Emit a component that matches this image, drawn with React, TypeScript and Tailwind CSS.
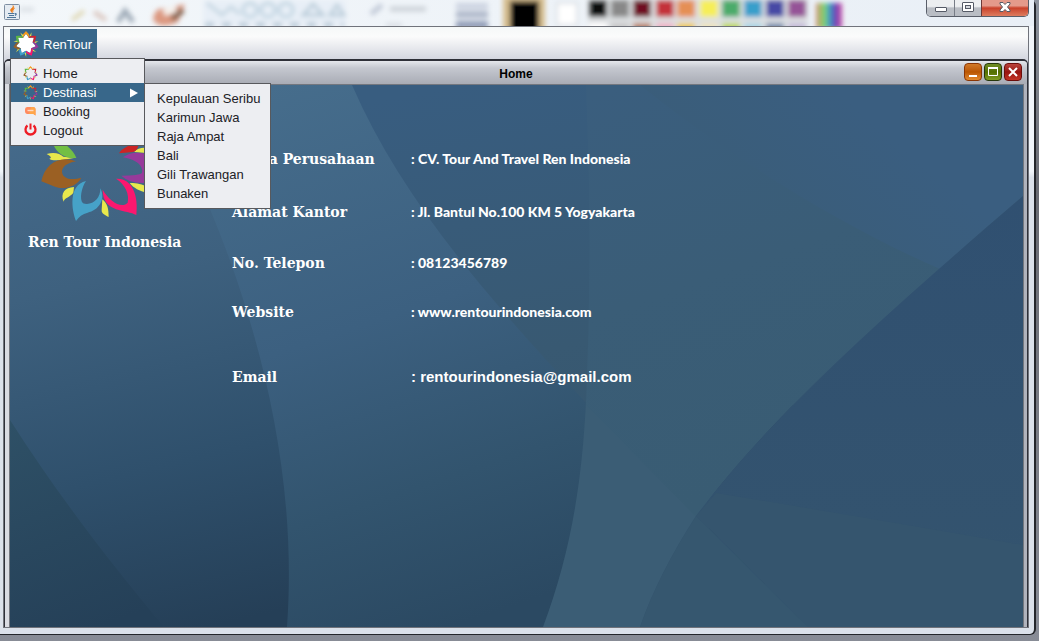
import React from "react";

const petals = ["#f59a1c", "#cf2430", "#94399a", "#f5176c", "#3d9fc9", "#96602a", "#5cb544"];

function StarIcon({ size, fill }: { size: number; fill?: string }) {
  return (
    <svg width={size} height={size} viewBox="-50 -50 100 100" aria-hidden="true" className="shrink-0">
      {fill && <circle r="26" fill={fill} />}
      {petals.map((color, i) => (
        <g key={color} transform={`rotate(${(i * 360) / 7})`}>
          <path d="M13 -28 L21 -45 L20 -29 Z" fill="#e5e64a" />
          {fill && <path d="M0 -40 L13 -20 H-13 Z" fill={fill} />}
          <path d="M0 -50 C5 -43 12 -40 14 -30 L12 -22 Q8 -32 0 -38 Q-8 -32 -12 -22 L-14 -30 C-12 -40 -5 -43 0 -50 Z" fill={color} />
        </g>
      ))}
    </svg>
  );
}

function BookingIcon() {
  return (
    <svg width="15" height="15" viewBox="0 0 15 15" aria-hidden="true" className="shrink-0">
      <path d="M4 3 H10 Q12.500 3 12.500 5.500 V11.500 L10.500 10 H4.500 Q2 10 2 7 V5.500 Q2 3 4 3 Z" fill="#ff8a5e" />
      <path d="M8 3 H10 Q12.500 3 12.500 5.500 V11.500 L10.500 10 H6 Z" fill="#ffa64a" />
      <path d="M4.500 6.500 H10.500" stroke="#ffd9c2" strokeWidth="1.400" />
    </svg>
  );
}

function PowerIcon() {
  return (
    <svg width="15" height="15" viewBox="0 0 15 15" aria-hidden="true" className="shrink-0">
      <path d="M4.500 2.500 A5 5 0 1 0 10.500 2.500" fill="none" stroke="#ee1c25" strokeWidth="2.300" />
      <path d="M7.500 0.500 V6.500" stroke="#ee1c25" strokeWidth="2" />
    </svg>
  );
}

function JavaIcon() {
  return (
    <svg width="16" height="16" viewBox="0 0 16 16" aria-hidden="true">
      <rect x="0.500" y="0.500" width="15" height="15" rx="1" fill="#e4ebf2" stroke="#7d8ea2" />
      <path d="M9 1.500 C10 4 5.500 4.500 6.800 7 L8 8.500 C7.500 6 11.500 5 9 1.500 Z" fill="#ef7d1a" stroke="#ef7d1a" strokeWidth="0.600" />
      <path d="M10.500 4.500 C8 5.500 9.500 7 8.500 8.500" fill="none" stroke="#ef7d1a" />
      <path d="M4 9.500 H10.500 M5 11.500 H10 M3 13.500 H12 M11 9.500 Q13.500 9.500 11 11.500" fill="none" stroke="#4d7598" strokeWidth="1.200" />
    </svg>
  );
}

const swatches: [number, string, string][] = [
  [598, "#0a0a0a", "#ffffff"],
  [620, "#888888", "#c8c8c8"],
  [642, "#701020", "#b98168"],
  [665, "#c4323a", "#efb2c6"],
  [686, "#e58f55", "#efca52"],
  [709, "#f6ee58", "#eee4bd"],
  [731, "#4cab6b", "#bed95a"],
  [753, "#379fcb", "#abd5e5"],
  [775, "#4749a5", "#788dae"],
  [797, "#955397", "#c6bcda"],
];

function GlassBackdrop() {
  return (
    <svg className="absolute inset-0 h-full w-full" aria-hidden="true">
      <defs>
        <filter id="soft" x="-20%" y="-50%" width="140%" height="200%">
          <feGaussianBlur stdDeviation="2.400" />
        </filter>
        <linearGradient id="rainbow">
          <stop offset="0" stopColor="#d58a75" />
          <stop offset="0.3" stopColor="#7fd765" />
          <stop offset="0.5" stopColor="#45a7c0" />
          <stop offset="0.7" stopColor="#554bbd" />
          <stop offset="1" stopColor="#d04aa0" />
        </linearGradient>
      </defs>
      <g filter="url(#soft)">
        <rect x="20" y="7" width="14" height="5" fill="#dde2e7" />
        <path d="M72 20 L84 11" stroke="#ded6b0" strokeWidth="4" />
        <path d="M94 12 L106 20" stroke="#dcc9c2" strokeWidth="5" />
        <path d="M118 22 L125 11 L133 22" stroke="#9fabb8" strokeWidth="5" fill="none" />
        <path d="M153 20 Q154 6 166 9 L185 4 L178 22 Q160 30 153 20 Z" fill="#dc9880" />
        <path d="M164 13 L176 9" stroke="#f8f4ef" strokeWidth="6" />
        <path d="M172 19 L183 10" stroke="#866450" strokeWidth="6" />
        <rect x="203" y="0" width="143" height="26" fill="#e8eff7" />
        <path d="M207 3 L222 15 L231 7 L240 14" stroke="#c1d3df" strokeWidth="3" fill="none" />
        {[250, 268, 286].map((cx) => (
          <circle key={cx} cx={cx} cy="10" r="7" fill="none" stroke="#bdd2df" strokeWidth="3" />
        ))}
        <path d="M303 15 L313 4 L323 15 Z M330 15 L337 5 L344 15 Z" stroke="#b7cbd8" strokeWidth="3" fill="none" />
        <path d="M205 25 H344" stroke="#b5c7d5" strokeWidth="5" strokeDasharray="9 8" />
        <path d="M371 14 L382 5" stroke="#c2cad8" strokeWidth="5" />
        <path d="M390 9 H426" stroke="#ccd2d8" strokeWidth="5" />
        <path d="M386 25 H402" stroke="#d0d5db" strokeWidth="3" />
        <rect x="456" y="3" width="32" height="6" fill="#cbd2e0" />
        <rect x="456" y="11" width="32" height="7" fill="#b0b9cb" />
        <rect x="456" y="21" width="32" height="8" fill="#929eb8" />
        <rect x="503" y="-4" width="42" height="36" fill="#d6bd8e" />
        <rect x="557" y="3" width="20" height="22" fill="#ffffff" stroke="#d8dde2" strokeWidth="2" />
        <rect x="588" y="-2" width="220" height="30" fill="#dde0e2" />
        <rect x="816" y="3" width="26" height="26" fill="url(#rainbow)" />
        {swatches.map(([x, top, bottom]) => (
          <g key={x}>
            <rect x={x - 9} y="0" width="18" height="17" fill={top} />
            <rect x={x - 9} y="23" width="18" height="9" fill={bottom} />
          </g>
        ))}
        <rect x="510" y="1" width="29" height="32" fill="#000000" />
      </g>
    </svg>
  );
}

function Wallpaper() {
  return (
    <svg
      className="absolute inset-0 h-full w-full"
      viewBox="10 85 1013 542"
      preserveAspectRatio="none"
      aria-hidden="true"
    >
      <defs>
        <linearGradient id="left" gradientUnits="userSpaceOnUse" x1="80" y1="85" x2="210" y2="627">
          <stop offset="0" stopColor="#466c8d" />
          <stop offset="0.35" stopColor="#3e617f" />
          <stop offset="0.7" stopColor="#2f506c" />
          <stop offset="1" stopColor="#253f57" />
        </linearGradient>
        <linearGradient id="middle" gradientUnits="userSpaceOnUse" x1="270" y1="85" x2="450" y2="627">
          <stop offset="0" stopColor="#466d8c" />
          <stop offset="0.45" stopColor="#3c6080" />
          <stop offset="0.75" stopColor="#32546e" />
          <stop offset="1" stopColor="#2b4962" />
        </linearGradient>
        <linearGradient id="right" gradientUnits="userSpaceOnUse" x1="460" y1="85" x2="560" y2="627">
          <stop offset="0" stopColor="#385d80" />
          <stop offset="0.5" stopColor="#385972" />
          <stop offset="1" stopColor="#34536a" />
        </linearGradient>
        <linearGradient id="wedge" gradientUnits="userSpaceOnUse" x1="20" y1="420" x2="100" y2="627">
          <stop offset="0" stopColor="#2e5066" />
          <stop offset="1" stopColor="#254058" />
        </linearGradient>
        <linearGradient id="band" gradientUnits="userSpaceOnUse" x1="620" y1="85" x2="760" y2="480">
          <stop offset="0" stopColor="#3a5e7e" />
          <stop offset="0.5" stopColor="#3a5d77" />
          <stop offset="1" stopColor="#395c73" />
        </linearGradient>
        <linearGradient id="sky" gradientUnits="userSpaceOnUse" x1="760" y1="230" x2="860" y2="110">
          <stop offset="0" stopColor="#3a5d79" />
          <stop offset="1" stopColor="#3a5e80" />
        </linearGradient>
        <linearGradient id="corner" x1="0" y1="0" x2="0" y2="1">
          <stop offset="0" stopColor="#305071" />
          <stop offset="1" stopColor="#34546e" />
        </linearGradient>
      </defs>
      <rect x="10" y="85" width="1013" height="542" fill="url(#left)" />
      <path d="M10 420 C60 498 112 565 164 627 H10 Z" fill="url(#wedge)" />
      <path d="M150 85 C225 220 302 420 287 627 H640 V85 Z" fill="url(#middle)" />
      <path d="M352 85 C400 195 480 290 588 405 H1023 V85 Z" fill="url(#right)" />
      <path d="M586 400 C582 485 570 555 543 627 H808 L710 505 L600 400 Z" fill="#3b5d75" />
      <path d="M586 405 Q593 245 586 85 H1023 V196 C855 340 760 430 696 517 Z" fill="url(#band)" />
      <path d="M640 85 H1023 V196 Q980 232 940 269 C850 230 740 165 640 85 Z" fill="url(#sky)" />
      <path d="M1023 196 C855 340 760 430 696 516 Q658 575 640 627 H1023 Z" fill="url(#corner)" />
      <path d="M716 493 Q880 520 1023 545 V627 H808 L696 516 Z" fill="#35556e" />
      <path d="M696 516 Q658 575 640 627 H808 Z" fill="#36576f" />
    </svg>
  );
}

function CompanyLogo() {
  return (
    <svg width="120" height="128" viewBox="90 150 360 384" role="img" aria-label="Ren Tour logo">
      <g fill="#e8e84c">
        <path d="M140 312 C165 305 180 312 190 320 L222 324 C195 330 155 335 148 326 C158 324 150 317 140 312 Z" />
        <path d="M222 411 C195 412 180 430 191 455 C192 444 212 440 220 428 Z" />
        <path d="M307 448 C323 461 326 478 326 501 C317 496 304 492 305 480 Z" />
        <path d="M389 400 C410 396 430 406 450 412 L440 428 C420 425 400 413 389 400 Z" />
        <path d="M402 306 Q420 288 450 296 L440 309 Z" />
      </g>
      <path d="M160 284 L164 230 Q170 260 204 290 Q223 306 229 324 C198 326 172 312 160 284 Z" fill="#72bf44" />
      <path d="M357 310 C364 295 385 290 388 284 L416 280 Q415 300 400 306 Z" fill="#cc2424" />
      <path d="M124 394 C135 340 180 315 228 334 C190 341 179 360 190 377 C204 391 226 388 244 383 C230 411 190 420 165 410 Q146 403 124 394 Z" fill="#9b6023" />
      <path d="M228 513 C215 480 204 405 258 393 C245 412 237 447 249 460 C276 468 302 447 301 415 C319 450 294 482 263 488 Q240 494 228 513 Z" fill="#46a2c8" />
      <path d="M308 419 C326 451 365 479 383 458 C389 433 376 403 348 386 C397 383 416 437 409 495 C382 478 308 490 308 419 Z" fill="#fc176f" />
      <path d="M369 322 Q398 298 450 315 V397 Q393 405 364 377 Q418 377 426 369 C431 347 408 328 369 322 Z" fill="#973a9b" />
    </svg>
  );
}

const destinations = ["Kepulauan Seribu", "Karimun Jawa", "Raja Ampat", "Bali", "Gili Trawangan", "Bunaken"];

const company: [string, string][] = [
  ["Nama Perusahaan", ": CV. Tour And Travel Ren Indonesia"],
  ["Alamat Kantor", ": Jl. Bantul No.100 KM 5 Yogyakarta"],
  ["No. Telepon", ": 08123456789"],
  ["Website", ": www.rentourindonesia.com"],
];

const itemClass = "flex h-[19px] w-full items-center gap-[5px] pl-3 text-left whitespace-nowrap";

function MainMenu() {
  return (
    <nav className="relative flex h-8 items-start bg-linear-to-b from-[#f5f8f8] via-[#fbfbfb] via-30% to-[#d4d7e0] pt-[2px] pl-1.5 text-[13px] leading-[19px]">
      <button className="flex h-[30px] items-center gap-1 bg-[#38678a] pr-[5px] pl-[3px] text-white">
        <StarIcon size={26} fill="#ffffff" />
        RenTour
      </button>
      <ul className="absolute top-[31px] left-1.5 z-20 w-[135px] border border-[#58595d] bg-[#edeef2] py-[5px] text-[#212126]">
        <li>
          <button className={itemClass}>
            <StarIcon size={15} />
            Home
          </button>
        </li>
        <li className="relative">
          <button className="flex h-[19px] w-full items-center gap-[5px] bg-[#38678a] pr-1.5 pl-3 text-left text-white" aria-haspopup="true" aria-expanded="true">
            <StarIcon size={15} />
            <span className="grow">Destinasi</span>
            <svg width="8" height="10" viewBox="0 0 8 10" aria-hidden="true">
              <path d="M0 0.500 L8 5 L0 9.500 Z" fill="#ffffff" />
            </svg>
          </button>
          <ul className="absolute top-0 left-full w-[127px] border border-[#58595d] bg-[#edeef2] py-[5px] text-[#212126]">
            {destinations.map((name) => (
              <li key={name}>
                <button className={itemClass}>{name}</button>
              </li>
            ))}
          </ul>
        </li>
        <li>
          <button className={itemClass}>
            <BookingIcon />
            Booking
          </button>
        </li>
        <li>
          <button className={itemClass}>
            <PowerIcon />
            Logout
          </button>
        </li>
      </ul>
    </nav>
  );
}

function CaptionButtons() {
  return (
    <div className="relative flex h-[17px] overflow-hidden rounded-b-[5px] border border-t-0 border-[#595e69]">
      <button aria-label="Minimize window" className="flex w-7 items-center justify-center border-r border-[#777c86] bg-linear-to-b from-[#eceef0] from-40% to-[#b9bdc4] to-50%">
        <svg width="12" height="12" viewBox="0 0 12 12" aria-hidden="true">
          <rect x="0.500" y="5.500" width="11" height="4" rx="0.500" fill="#fff" stroke="#555a66" />
        </svg>
      </button>
      <button aria-label="Maximize window" className="flex w-[27px] items-start justify-center border-r border-[#6b3a38] bg-linear-to-b from-[#eceef0] from-40% to-[#b9bdc4] to-50% pt-[2px]">
        <svg width="12" height="10" viewBox="0 0 12 10" aria-hidden="true">
          <rect x="0.500" y="0.500" width="11" height="9" rx="0.500" fill="#fff" stroke="#555a66" />
          <rect x="3.500" y="3.500" width="5" height="3" fill="#d5d8dd" stroke="#555a66" />
        </svg>
      </button>
      <button aria-label="Close window" className="flex w-[46px] items-start justify-center bg-linear-to-b from-[#e49a8b] from-35% via-[#c9402a] via-50% to-[#dd7c5f] pt-[2px]">
        <svg width="12" height="10" viewBox="0 0 12 10" aria-hidden="true">
          <path d="M1 0.500 H4 L6 2.500 L8 0.500 H11 V2 L8.500 5 L11 8 V9.500 H8 L6 7.500 L4 9.500 H1 V8 L3.500 5 L1 2 Z" fill="#fff" stroke="#555a66" />
        </svg>
      </button>
    </div>
  );
}

export default function App() {
  return (
    <div className="flex min-h-screen flex-col bg-linear-to-b from-[#8d939d] via-[#696b73] via-30% to-[#888c96] pr-[3px] pb-1.5 font-['Liberation_Sans',Arial,sans-serif] text-black">
      <div className="flex grow flex-col rounded-tr-[6px] rounded-br-[6px] border-r-2 border-b border-[#24262b] bg-linear-to-b from-[#f1f5fa] from-27% to-[#dbe1ea] to-28% pb-1.5">
        <header className="relative flex h-[26px] items-start justify-between bg-linear-to-r from-[#f3f7fa] to-[#e9eff6] pr-[5px] pl-1">
          <GlassBackdrop />
          <div className="relative pt-1">
            <JavaIcon />
          </div>
          <CaptionButtons />
        </header>
        <div className="mr-[5px] ml-[3px] flex grow flex-col border border-[#70737b] bg-[#d4d7e0]">
          <MainMenu />
          <main className="flex grow flex-col rounded-t-[5px] border-x border-t-2 border-[#2e3038] bg-linear-to-r from-[#d9dbe2] to-[#b0b3bc]">
            <div className="relative flex h-[23px] items-center justify-center rounded-t-[4px] bg-linear-to-b from-[#e5e7ec] via-[#c5c8d0] via-30% to-[#a9acb5]">
              <h1 className="pt-0.5 text-[12px] leading-4 font-bold">Home</h1>
              <div className="absolute top-[2px] right-[5px] flex gap-[2px]">
                <button aria-label="Minimize" className="flex size-[18px] items-center justify-center rounded-[4px] border border-[#8a3605] bg-linear-to-b from-[#d17a28] via-[#ba5600] to-[#e38a2c]">
                  <svg width="12" height="12" viewBox="0 0 12 12" aria-hidden="true">
                    <path d="M2 10 H10" stroke="#fff" strokeWidth="2" />
                  </svg>
                </button>
                <button aria-label="Maximize" className="flex size-[18px] items-center justify-center rounded-[4px] border border-[#26370a] bg-linear-to-b from-[#708e25] via-[#536e00] to-[#829d23]">
                  <svg width="12" height="12" viewBox="0 0 12 12" aria-hidden="true">
                    <path d="M1.500 2 V9.500 H10.500 V2" stroke="#fff" fill="none" />
                    <path d="M1 2 H11" stroke="#fff" strokeWidth="2" />
                  </svg>
                </button>
                <button aria-label="Close" className="flex size-[18px] items-center justify-center rounded-[4px] border border-[#6c0d0a] bg-linear-to-b from-[#bb433b] via-[#971310] to-[#c43325]">
                  <svg width="12" height="12" viewBox="0 0 12 12" aria-hidden="true">
                    <path d="M2 2 L10 10 M10 2 L2 10" stroke="#fff" strokeWidth="2" />
                  </svg>
                </button>
              </div>
            </div>
            <div className="relative mr-[3px] ml-1 flex grow border-x border-t border-[#73777f] text-white">
              <Wallpaper />
              <section className="relative w-[222px] shrink-0 pt-[15px] pl-[18px]">
                <div className="pl-[2px]">
                  <CompanyLogo />
                </div>
                <p className="pt-1 font-['DejaVu_Serif',serif] text-[14px] leading-5 font-bold whitespace-nowrap">Ren Tour Indonesia</p>
              </section>
              <dl className="relative grid grow auto-rows-min grid-cols-[179px_1fr] grid-rows-[53px_51px_49px_65px_20px] pt-16 leading-5 font-bold">
                {company.map(([label, value]) => (
                  <React.Fragment key={label}>
                    <dt className="font-['DejaVu_Serif',serif] text-[14px]">{label}</dt>
                    <dd className="font-['Lato',sans-serif] text-[14px] font-black">{value}</dd>
                  </React.Fragment>
                ))}
                <dt className="font-['DejaVu_Serif',serif] text-[14px]">Email</dt>
                <dd className="text-[15px]">: rentourindonesia@gmail.com</dd>
              </dl>
            </div>
          </main>
        </div>
      </div>
    </div>
  );
}
